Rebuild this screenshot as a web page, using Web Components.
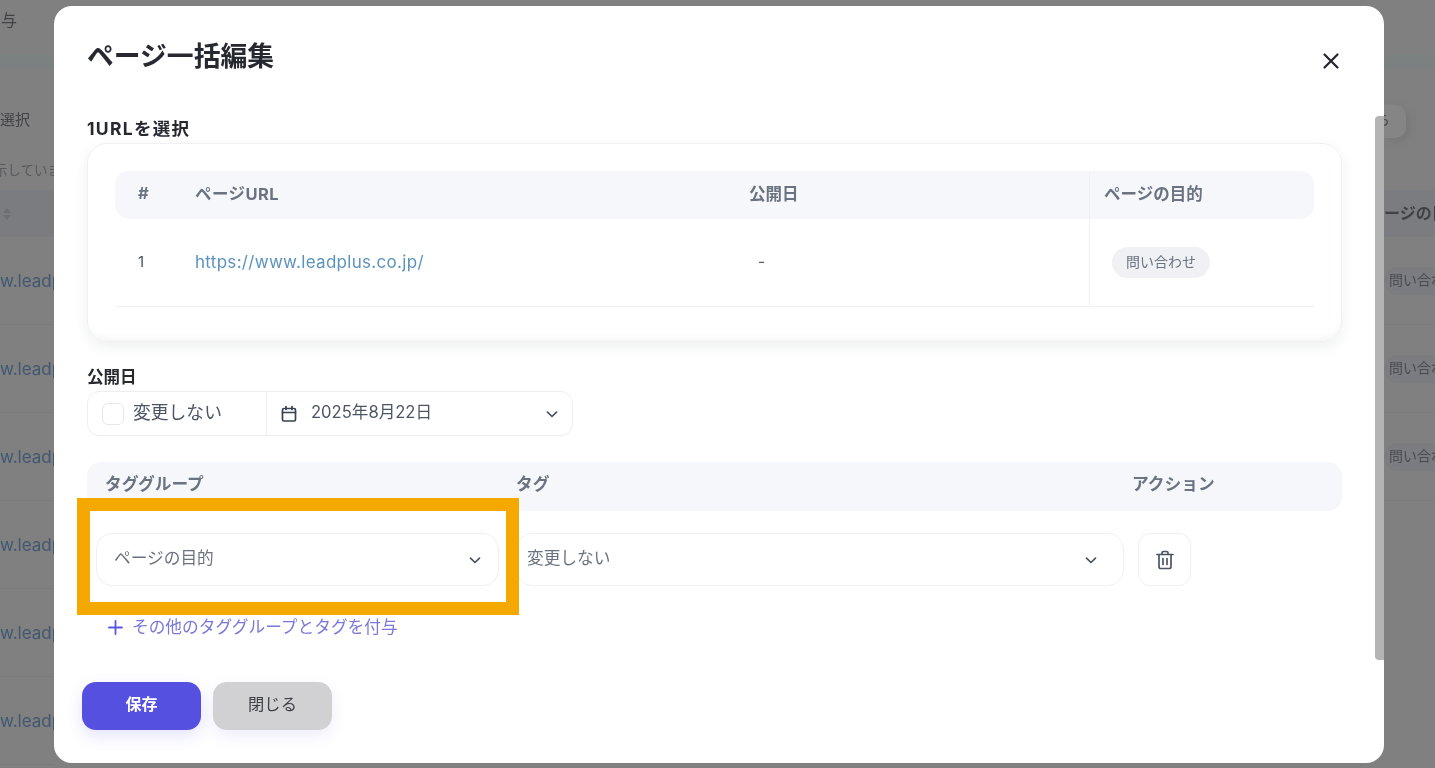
<!DOCTYPE html>
<html lang="ja">
<head>
<meta charset="utf-8">
<title>ページ一括編集</title>
<style>
  html, body { margin: 0; height: 100%; overflow: hidden; background: #808080; }
  body { font-family: Inter, "Noto Sans CJK JP", sans-serif; filter: blur(0.6px); }
</style>
</head>
<body>
<lp-backdrop></lp-backdrop>
<lp-modal heading="ページ一括編集">
  <lp-label>1URLを選択</lp-label>
  <lp-url-table></lp-url-table>
  <lp-label small style="margin-top:24px">公開日</lp-label>
  <lp-date-field></lp-date-field>
  <lp-tag-editor></lp-tag-editor>
  <lp-actions></lp-actions>
</lp-modal>
<script>
const FONT = 'Inter, "Noto Sans CJK JP", sans-serif';
const CHEVRON = '<svg width="14" height="14" viewBox="0 0 14 14" fill="none" stroke="#4b5563" stroke-width="1.7" stroke-linecap="round" stroke-linejoin="round"><path d="M2.500 5.200l4.500 4.300 4.500-4.300"/></svg>';

class LpBackdrop extends HTMLElement {
  connectedCallback() {
    this.attachShadow({ mode: 'open' });
    const rows = [0, 1, 2, 3, 4, 5].map(() => '<div class="row"><span>w.leadp</span></div>').join('');
    const badges = [0, 1, 2].map(() => '<div class="row"><b>問い合わ</b></div>').join('');
    this.shadowRoot.innerHTML = `
      <style>
        :host {
          display: flex;
          justify-content: space-between;
          height: 768px;
          overflow: hidden;
          font-family: ${FONT};
        }
        .side { width: 54px; overflow: hidden; flex: none; }
        .top { height: 55px; padding: 9px 0 0 1px; box-sizing: border-box; font-size: 16px; line-height: 22px; white-space: nowrap; color: #424246; }
        .band { height: 13px; background: #7b8181; }
        .pick { margin-top: 40px; height: 24px; font-size: 15px; line-height: 24px; white-space: nowrap; color: #424246; }
        .note { margin-top: 26px; height: 24px; font-size: 13.500px; line-height: 24px; white-space: nowrap; color: #5a5a5e; }
        .note span { margin-left: -6px; }
        .head { margin-top: 8px; height: 47px; background: #7b7c7f; display: flex; align-items: center; padding-left: 2px; }
        .row { height: 87px; border-bottom: 1px solid #7a7a7a; display: flex; align-items: center; white-space: nowrap; }
        .row span { font-size: 17px; color: #3f5771; flex: none; }
        .right { width: 51px; }
        .gap { height: 37px; }
        .btn { width: 22px; height: 33px; background: #858585; border-radius: 0 10px 10px 0; box-shadow: 3px 3px 8px #767676; font-size: 14px; line-height: 30px; color: #4a4a4e; overflow: hidden; white-space: nowrap; }
        .btn span { margin-left: -8px; }
        .right .head { margin-top: 52px; padding: 0 0 4px; box-sizing: border-box; overflow: hidden; white-space: nowrap; font-size: 16px; font-weight: 700; color: #3f4145; }
        .right .row b { background: #7a7c80; font-weight: 400; font-size: 14px; color: #4a4c52; height: 28px; line-height: 26px; padding-left: 5px; border-radius: 14px 0 0 14px; width: 100%; overflow: hidden; }
      </style>
      <div class="side">
        <div class="top">与</div>
        <div class="band"></div>
        <div class="pick">選択</div>
        <div class="note"><span>示していま</span></div>
        <div class="head"><svg width="10" height="14" viewBox="0 0 10 14" fill="#6e6f72"><path d="M5 1l4 5H1zM5 13L1 8h8z"/></svg></div>
        ${rows}
      </div>
      <div class="side right">
        <div style="height:55px"></div>
        <div class="band"></div>
        <div class="gap"></div>
        <div class="btn"><span>ら</span></div>
        <div class="head">ージの目</div>
        ${badges}
      </div>
    `;
  }
}
customElements.define('lp-backdrop', LpBackdrop);

class LpModal extends HTMLElement {
  connectedCallback() {
    this.attachShadow({ mode: 'open' });
    this.shadowRoot.innerHTML = `
      <style>
        :host {
          display: block;
          position: fixed;
          left: 54px;
          top: 6px;
          width: 1330px;
          height: 757px;
          box-sizing: border-box;
          padding: 30px 42px 0 33px;
          background: #fff;
          border-radius: 18px;
          overflow: hidden;
          color: #1f2430;
          font-family: ${FONT};
        }
        h1 { margin: 0 0 40px; font-size: 26.800px; line-height: 40px; font-weight: 700; color: #262930; white-space: nowrap; }
        .close { position: absolute; left: 1268px; top: 46px; width: 18px; height: 18px; }
        .scroll { position: absolute; left: 1321px; top: 110px; width: 9px; height: 544px; background: #b4b4b4; border-radius: 4px 0 0 4px; }
      </style>
      <h1>${this.getAttribute('heading')}</h1>
      <svg class="close" viewBox="0 0 18 18" fill="none" stroke="#22252c" stroke-width="2.200" stroke-linecap="round"><path d="M2.500 2.500l13 13M15.500 2.500l-13 13"/></svg>
      <slot></slot>
      <div class="scroll"></div>
    `;
  }
}
customElements.define('lp-modal', LpModal);

class LpLabel extends HTMLElement {
  connectedCallback() {
    this.attachShadow({ mode: 'open' });
    this.shadowRoot.innerHTML = `
      <style>
        :host { display: block; height: 24px; font-size: 17.500px; letter-spacing: 1.300px; line-height: 25px; font-weight: 700; color: #262930; white-space: nowrap; }
        :host([small]) { height: 22px; line-height: 22px; font-size: 16.500px; letter-spacing: 0; }
      </style>
      <slot></slot>
    `;
  }
}
customElements.define('lp-label', LpLabel);

class LpBadge extends HTMLElement {
  connectedCallback() {
    this.attachShadow({ mode: 'open' });
    this.shadowRoot.innerHTML = `
      <style>
        :host { display: inline-flex; align-items: center; box-sizing: border-box; height: 31px; padding: 0 14px 3px; border-radius: 16px; background: #f0f1f4; font-size: 14px; color: #6b7280; white-space: nowrap; }
      </style>
      <slot></slot>
    `;
  }
}
customElements.define('lp-badge', LpBadge);

class LpUrlTable extends HTMLElement {
  connectedCallback() {
    this.attachShadow({ mode: 'open' });
    this.shadowRoot.innerHTML = `
      <style>
        :host {
          display: block;
          margin-top: 3px;
          box-sizing: border-box;
          height: 199px;
          padding: 27px;
          border: 1px solid #eff0f2;
          border-radius: 20px;
          box-shadow: 0 5px 14px rgba(30, 40, 60, 0.07), inset 0 -8px 8px -6px rgba(30, 40, 60, 0.05);
        }
        .grid { display: grid; grid-template-columns: 80px 554px 340px 225px; }
        .th { height: 48px; box-sizing: border-box; padding-bottom: 4px; background: #f5f7fa; display: flex; align-items: center; font-size: 16.500px; font-weight: 700; color: #6b7280; white-space: nowrap; }
        .url { letter-spacing: 0.450px; }
        .td { height: 88px; box-sizing: border-box; padding-bottom: 2px; border-bottom: 1px solid #f0f1f3; display: flex; align-items: center; font-size: 15px; color: #4b5563; white-space: nowrap; }
        .c1 { padding-left: 23px; }
        .th.c1 { border-radius: 14px 0 0 14px; }
        .th.c4 { border-radius: 0 14px 14px 0; }
        .c4 { padding-left: 14px; border-left: 1px solid #f0f1f3; }
        .td.c4 { padding-left: 22px; padding-bottom: 0; }
        a { color: #5b93bc; text-decoration: none; font-size: 17px; letter-spacing: 0.3px; }
        .dash { padding-left: 9px; }
      </style>
      <div class="grid">
        <div class="th c1">#</div>
        <div class="th url">ページURL</div>
        <div class="th">公開日</div>
        <div class="th c4">ページの目的</div>
        <div class="td c1">1</div>
        <div class="td"><a href="#">https://www.leadplus.co.jp/</a></div>
        <div class="td"><span class="dash">-</span></div>
        <div class="td c4"><lp-badge>問い合わせ</lp-badge></div>
      </div>
    `;
  }
}
customElements.define('lp-url-table', LpUrlTable);

class LpDateField extends HTMLElement {
  connectedCallback() {
    this.attachShadow({ mode: 'open' });
    this.shadowRoot.innerHTML = `
      <style>
        :host {
          display: flex;
          margin-top: 3px;
          box-sizing: border-box;
          width: 486px;
          height: 45px;
          border: 1px solid #eceef0;
          border-radius: 12px;
          font-size: 17.800px;
          color: #4b5563;
          white-space: nowrap;
        }
        .keep { width: 179px; box-sizing: border-box; border-right: 1px solid #eceef0; display: flex; align-items: center; gap: 9px; padding-left: 14px; }
        .keep span, .date span { padding-bottom: 6px; }
        .box { width: 22px; height: 22px; box-sizing: border-box; border: 1px solid #e5e7eb; border-radius: 6px; }
        .date { flex: 1; display: flex; align-items: center; padding: 0 13px 0 14px; gap: 14px; font-size: 16.600px; }
        .date span { flex: 1; }
      </style>
      <div class="keep"><div class="box"></div><span>変更しない</span></div>
      <div class="date">
        <svg width="16" height="18" viewBox="0 0 16 18" fill="none" stroke="#374151" stroke-width="1.700" stroke-linecap="round"><rect x="1.500" y="3.500" width="13" height="12.500" rx="1.500"/><path d="M1.500 7.500h13M5 1.500v3M11 1.500v3"/></svg>
        <span>2025年8月22日</span>
        ${CHEVRON}
      </div>
    `;
  }
}
customElements.define('lp-date-field', LpDateField);

class LpSelect extends HTMLElement {
  connectedCallback() {
    this.attachShadow({ mode: 'open' });
    this.shadowRoot.innerHTML = `
      <style>
        :host {
          display: flex;
          align-items: center;
          justify-content: space-between;
          box-sizing: border-box;
          height: 53px;
          border: 1px solid #eef0f2;
          border-radius: 16px;
          padding: 0 var(--pad-end, 16px) 0 var(--pad, 17px);
          font-size: 16.700px;
          color: #6b7280;
          white-space: nowrap;
        }
        span { padding-bottom: 6px; }
      </style>
      <span><slot></slot></span>
      ${CHEVRON}
    `;
  }
}
customElements.define('lp-select', LpSelect);

class LpTagEditor extends HTMLElement {
  connectedCallback() {
    this.attachShadow({ mode: 'open' });
    this.shadowRoot.innerHTML = `
      <style>
        :host { display: block; margin-top: 26px; position: relative; }
        .head { height: 49px; box-sizing: border-box; padding: 0 0 7px 18px; background: #f5f7fa; border-radius: 14px; display: grid; grid-template-columns: 411px 616px 1fr; align-items: center; font-size: 16.700px; font-weight: 700; color: #6b7280; white-space: nowrap; }
        .row { margin: 22px 0 0 9px; display: grid; grid-template-columns: 403px 611px 53px; column-gap: 14px; }
        .row lp-select:nth-child(2) { margin-left: 3px; --pad: 10px; --pad-end: 25px; }
        .trash { height: 53px; box-sizing: border-box; border: 1px solid #eef0f2; border-radius: 12px; display: flex; align-items: center; justify-content: center; }
        .add { margin: 29px 0 0 21px; height: 24px; display: flex; align-items: center; gap: 9px; font-size: 16.700px; color: #7b78d8; white-space: nowrap; }
        .add span { padding-bottom: 2px; }
        .mark { position: absolute; left: -10px; top: 36px; width: 442px; height: 117px; box-sizing: border-box; border: 13px solid #f5a800; }
      </style>
      <div class="head"><span>タググループ</span><span>タグ</span><span>アクション</span></div>
      <div class="row">
        <lp-select>ページの目的</lp-select>
        <lp-select>変更しない</lp-select>
        <div class="trash">
          <svg width="18" height="20" viewBox="0 0 18 20" fill="none" stroke="#4b5563" stroke-width="1.700" stroke-linecap="round" stroke-linejoin="round"><path d="M1 4.500h16M6 4.500V2.800C6 2 6.700 1.500 7.400 1.500h3.200c.7 0 1.400.5 1.400 1.300v1.700M3 4.500v12.300c0 1 .8 1.700 1.700 1.700h8.600c.9 0 1.700-.7 1.700-1.700V4.500M7 8.500v6M11 8.500v6"/></svg>
        </div>
      </div>
      <div class="add">
        <svg width="15" height="15" viewBox="0 0 15 15" fill="none" stroke="#5a55e0" stroke-width="1.800" stroke-linecap="round"><path d="M7.500 1v13M1 7.500h13"/></svg>
        <span>その他のタググループとタグを付与</span>
      </div>
      <div class="mark"></div>
    `;
  }
}
customElements.define('lp-tag-editor', LpTagEditor);

class LpActions extends HTMLElement {
  connectedCallback() {
    this.attachShadow({ mode: 'open' });
    this.shadowRoot.innerHTML = `
      <style>
        :host { display: flex; gap: 12px; margin: 43px 0 0 -5px; }
        button {
          width: 119px;
          height: 48px;
          padding: 0 0 6px;
          border: 0;
          border-radius: 14px;
          font: 700 16px ${FONT};
          background: #5550e0;
          color: #fff;
          box-shadow: 0 6px 16px rgba(85, 80, 224, 0.16);
        }
        button.sub { background: #d1d1d4; color: #3f4147; font-weight: 400; font-size: 16.300px; box-shadow: 0 6px 16px rgba(85, 80, 224, 0.1); }
      </style>
      <button>保存</button>
      <button class="sub">閉じる</button>
    `;
  }
}
customElements.define('lp-actions', LpActions);
</script>
</body>
</html>
